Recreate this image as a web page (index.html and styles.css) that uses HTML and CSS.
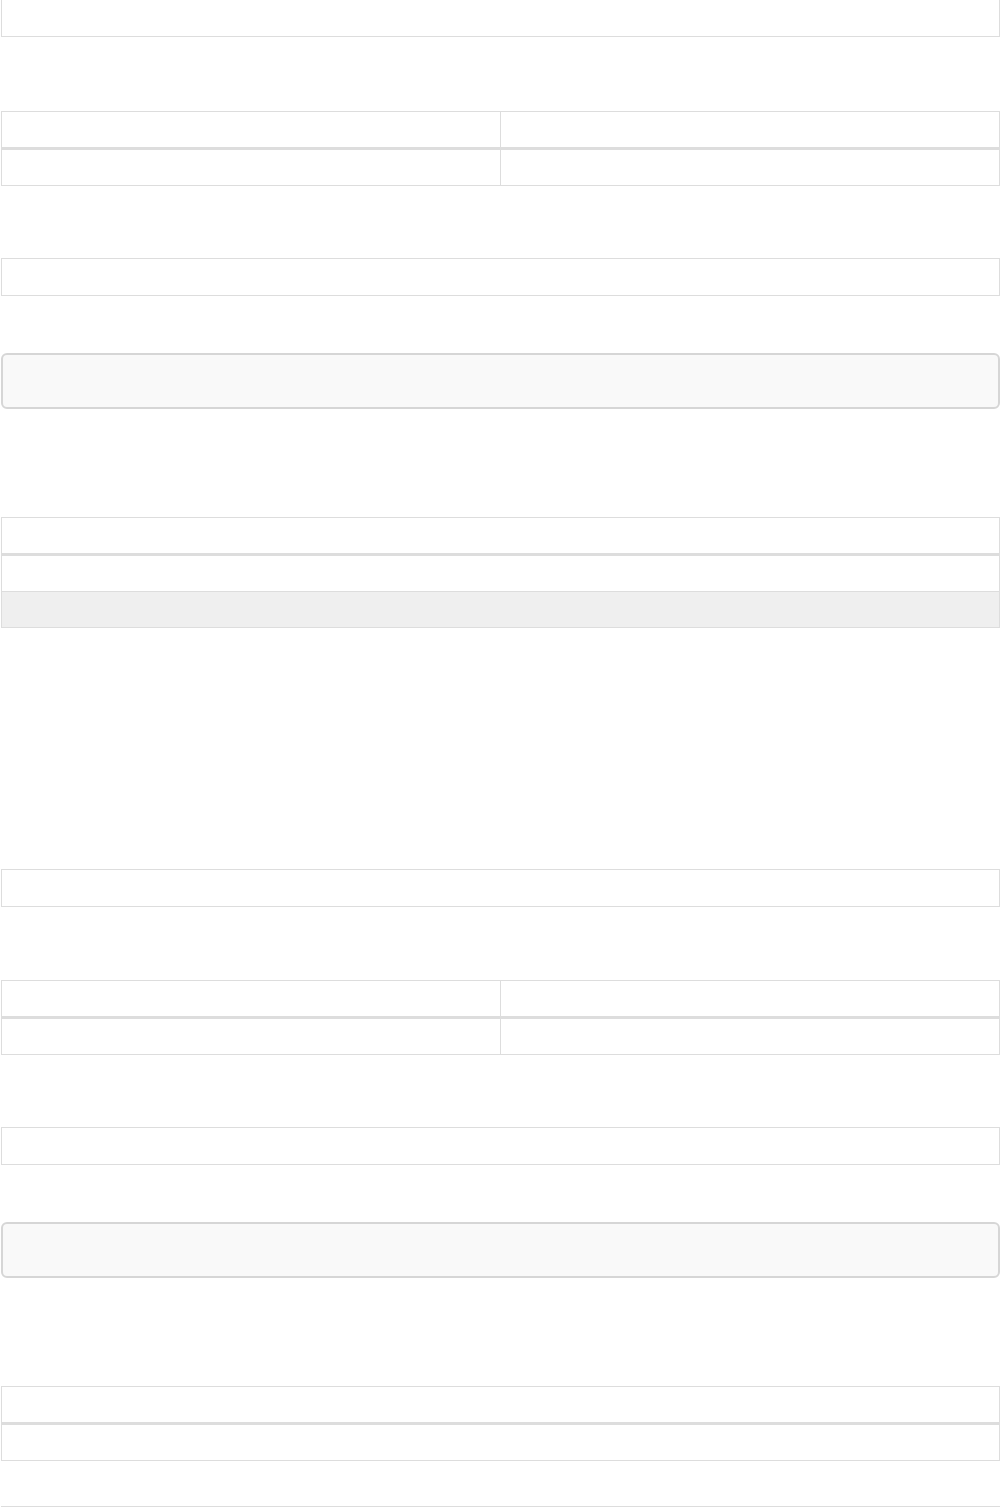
FILE: index.html
```
<!DOCTYPE html>
<html lang="en">
<head>
    <meta charset="UTF-8">
    <meta name="viewport" content="width=device-width, initial-scale=1.0">
    <title>Report</title>
    <link rel="stylesheet" href="styles.css">
</head>
<body>
    <div class="page">
        <!-- primera seccion -->
        <div class="section">
            <div class="box box-lead box-first"></div>

            <table class="grid grid-two">
                <thead>
                    <tr><th></th><th></th></tr>
                </thead>
                <tbody>
                    <tr><td></td><td></td></tr>
                </tbody>
            </table>

            <div class="box"></div>

            <div class="code-box"></div>

            <table class="grid grid-one">
                <thead>
                    <tr><th></th></tr>
                </thead>
                <tbody>
                    <tr><td></td></tr>
                    <tr class="row-muted"><td></td></tr>
                </tbody>
            </table>
        </div>

        <!-- segunda seccion -->
        <div class="section">
            <div class="box box-lead box-second"></div>

            <table class="grid grid-two">
                <thead>
                    <tr><th></th><th></th></tr>
                </thead>
                <tbody>
                    <tr><td></td><td></td></tr>
                </tbody>
            </table>

            <div class="box"></div>

            <div class="code-box"></div>

            <table class="grid grid-one grid-last">
                <thead>
                    <tr><th></th></tr>
                </thead>
                <tbody>
                    <tr><td></td></tr>
                </tbody>
            </table>
        </div>

        <div class="divider"></div>
    </div>
</body>
</html>
```

FILE: styles.css
```
* {
    box-sizing: border-box;
}
body {
    font-family: "Liberation Sans", Arial, sans-serif;
    font-size: 14px;
    background-color: #fff;
    color: #333;
    margin: 0;
    padding: 0;
    overflow: hidden;
}
.page {
    width: 999px;
    margin-left: 1px;
}
.section {
    display: flex;
    flex-direction: column;
}
.section + .section {
    margin-top: 241px;
}
.box {
    height: 38px;
    border: 1px solid #ddd;
    margin-bottom: 57px;
}
.box-lead {
    margin-bottom: 74px;
}
.box-first {
    margin-top: -1px;
}
.box-second {
    margin-bottom: 73px;
}
.grid {
    width: 100%;
    border-collapse: separate;
    border-spacing: 0;
    border-top: 1px solid #ddd;
    border-left: 1px solid #ddd;
    margin-bottom: 72px;
    table-layout: fixed;
}
.grid th,
.grid td {
    padding: 0;
    height: 36px;
    border-right: 1px solid #ddd;
    border-bottom: 1px solid #ddd;
}
.grid th {
    height: 38px;
    border-bottom: 3px solid #ddd;
}
.grid-two th:first-child,
.grid-two td:first-child {
    width: 499px;
}
.row-muted td {
    background-color: #efefef;
}
.code-box {
    height: 56px;
    background-color: #f9f9f9;
    border: 2px solid #d6d6d6;
    border-radius: 6px;
    margin-bottom: 108px;
}
.grid-one {
    margin-bottom: 0;
}
.grid-last {
    margin-bottom: 45px;
}
.divider {
    border-top: 1px solid #ddd;
    height: 1px;
}
```
